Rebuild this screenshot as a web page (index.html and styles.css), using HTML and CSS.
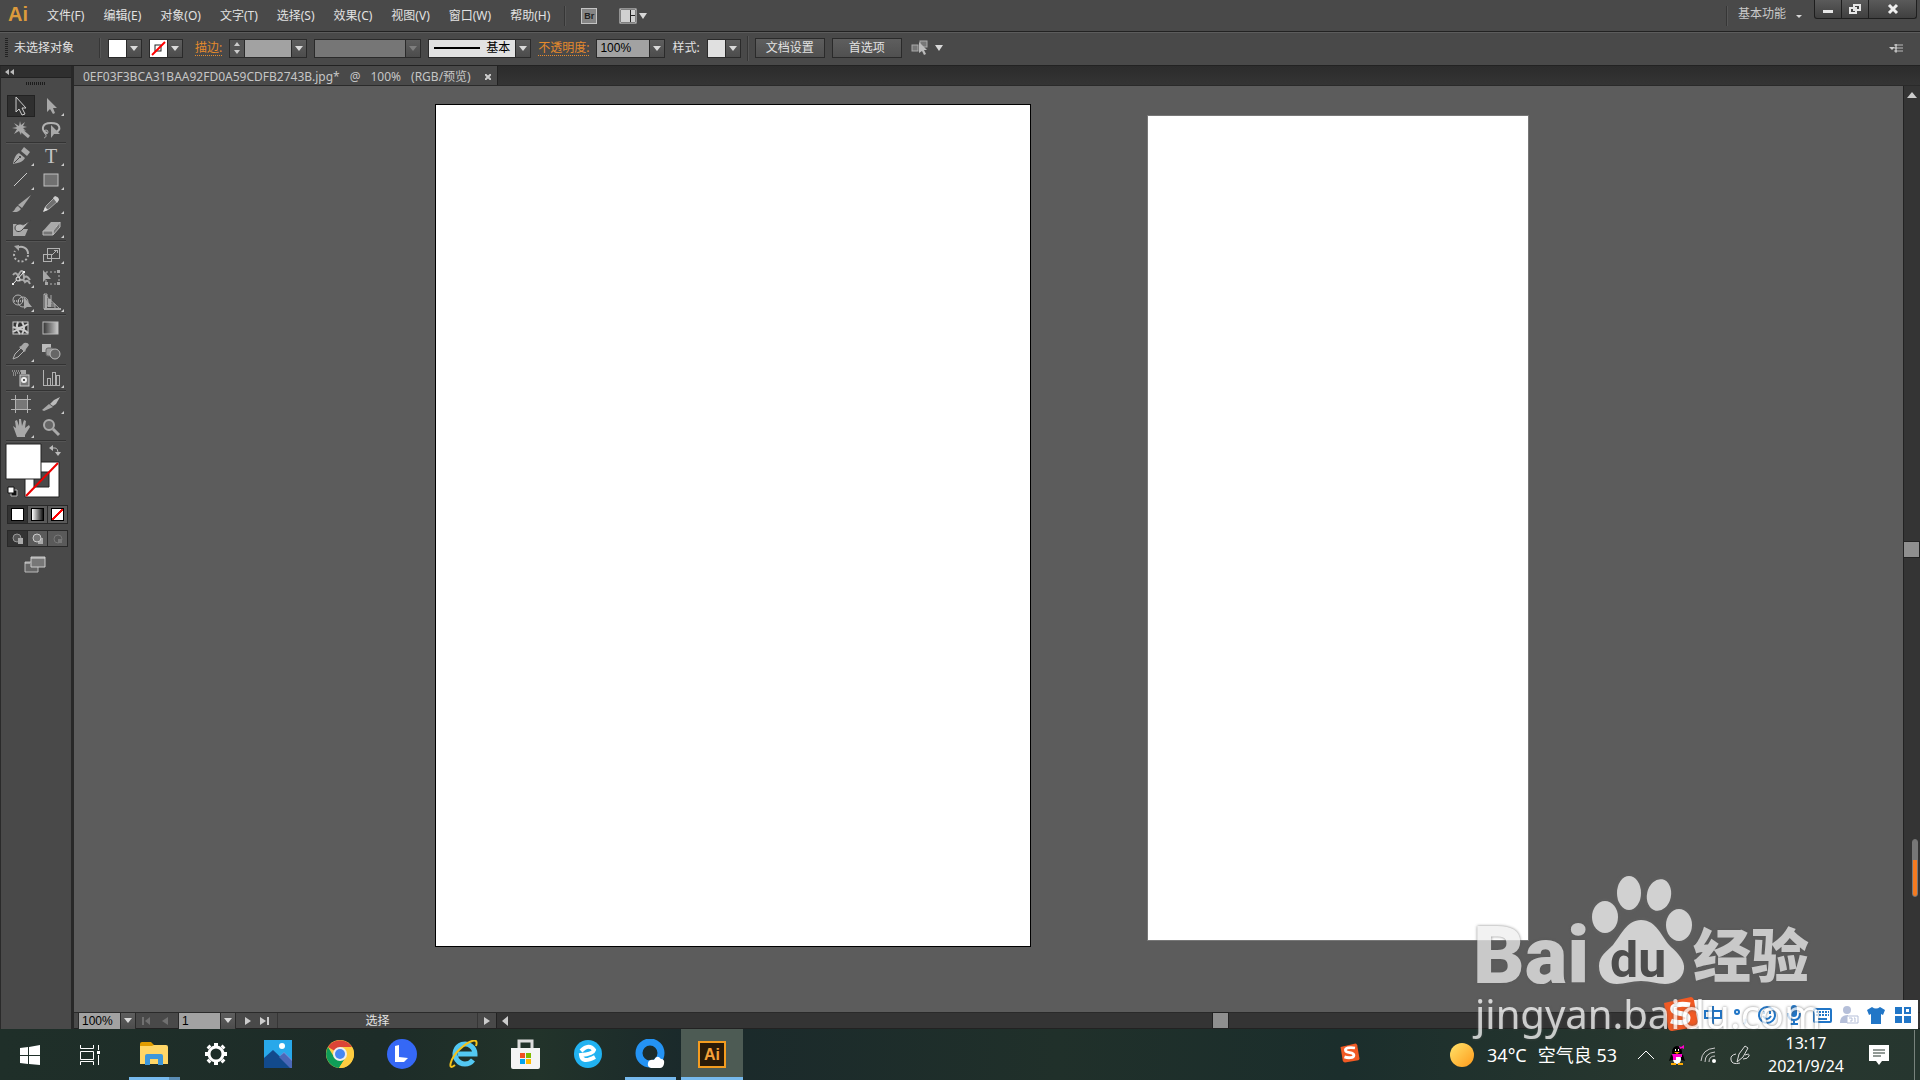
FILE: index.html
```
<!DOCTYPE html>
<html lang="zh-CN">
<head>
<meta charset="utf-8">
<title>Illustrator</title>
<link rel="stylesheet" href="styles.css">
</head>
<body>
<header class="menubar">
  <span class="app-logo">Ai</span>
  <nav class="menus">
    <button>文件(F)</button><button>编辑(E)</button><button>对象(O)</button><button>文字(T)</button><button>选择(S)</button><button>效果(C)</button><button>视图(V)</button><button>窗口(W)</button><button>帮助(H)</button>
  </nav>
  <span class="vline"></span>
  <button class="bridge" aria-label="Bridge">Br</button>
  <button class="arrange" aria-label="排列文档">
    <svg width="28" height="16" viewBox="0 0 28 16"><rect x="1" y="1" width="16" height="14" fill="#222" stroke="#ddd" stroke-width="1"/><path d="M2 2h9v12H2zM12 2h4v5h-4zM12 8h4v6h-4z" fill="#d0d0d0"/><path d="M20 5h8l-4 6z" fill="#d8d8d8"/></svg>
  </button>
  <span class="vline push"></span>
  <button class="workspace">基本功能<i class="caret small"></i></button>
  <div class="window-controls">
    <button aria-label="最小化"><svg width="12" height="12"><path d="M1 7h10v3H1z" fill="#e6e6e6"/></svg></button>
    <button aria-label="还原"><svg width="14" height="12"><path d="M6 2h6v5H6z M2 5h6v5H2z" fill="#444" stroke="#e6e6e6" stroke-width="2"/></svg></button>
    <button class="wide" aria-label="关闭"><svg width="12" height="12"><path d="M2 2l8 8M10 2L2 10" stroke="#eee" stroke-width="3"/></svg></button>
  </div>
</header>

<section class="controlbar">
  <i class="grip"></i>
  <span class="state">未选择对象</span>
  <span class="vline"></span>
  <div class="combo"><button class="swatch white" aria-label="填色"></button><i class="drop"></i></div>
  <div class="combo"><button class="swatch white" aria-label="描边颜色"><svg width="17" height="17"><rect x="5" y="5" width="6" height="6" fill="none" stroke="#222"/><path d="M2 15L15 2" stroke="#f00" stroke-width="2"/></svg></button><i class="drop"></i></div>
  <label class="link first" for="stroke-w">描边:</label>
  <div class="combo"><span class="spin"><i></i><i class="down"></i></span><input id="stroke-w" class="w46" type="text"><i class="drop"></i></div>
  <div class="combo off"><select class="w90" aria-label="变量宽度" disabled><option></option></select><i class="drop"></i></div>
  <div class="combo"><span class="brush"><i></i><select aria-label="画笔定义"><option>基本</option></select></span><i class="drop"></i></div>
  <label class="link" for="opacity">不透明度:</label>
  <div class="combo"><input id="opacity" class="w52" type="text" value="100%"><i class="drop"></i></div>
  <span>样式:</span>
  <div class="combo"><button class="swatch" aria-label="样式"></button><i class="drop"></i></div>
  <span class="vline tight"></span>
  <button class="push-btn">文档设置</button>
  <button class="push-btn">首选项</button>
  <button class="similar" aria-label="选择类似的对象">
    <svg width="34" height="18" viewBox="0 0 34 18"><rect x="2" y="6" width="6" height="6" fill="#777" stroke="#aaa"/><rect x="10" y="2" width="7" height="6" fill="#777" stroke="#aaa"/><path d="M9 3v11l3-2 2 4 2-1-2-4h3z" fill="#bbb"/><path d="M25 6h8l-4 6z" fill="#d8d8d8"/></svg>
  </button>
  <button class="panel-menu" aria-label="面板菜单"><svg width="15" height="9"><path d="M0 3h6L3 6z" fill="#ccc"/><path d="M6 0h2v2H6zM6 3h2v2H6zM6 6h2v2H6zM9 1h5M9 4h5M9 7h5" stroke="#bbb" fill="#bbb" stroke-width="1"/></svg></button>
</section>

<div class="work">
  <aside class="tools">
    <div class="tools-head"><svg width="9" height="6"><path d="M4 0v6L0 3zM9 0v6L5 3z" fill="#bbb"/></svg></div>
    <div class="tools-grip"></div>
    <div class="tool-grid">
      <button class="on" aria-label="选择"><svg viewBox="0 0 30 24"><path d="M10 3v15l3-3 3 6 3-1-3-6h4z" fill="#333" stroke="#ccc"/></svg></button>
      <button class="more" aria-label="直接选择"><svg viewBox="0 0 30 24"><path d="M11 4v14l3-3 3 5 2-1-2-5h4z" class="g"/></svg></button>
      <button aria-label="魔棒"><svg viewBox="0 0 30 24"><path d="M14 3l1 4 4-3-2 4 4 1-4 1 3 3-4-1-1 5-2-4-5 3 3-5-5-1 5-1-3-4 5 3z" class="g"/><path d="M15 12l8 7" stroke="#aaa" stroke-width="3"/></svg></button>
      <button aria-label="套索"><svg viewBox="0 0 30 24"><path d="M11 15c-6-2-6-10 4-10s10 7 5 9" class="s" stroke-width="2"/><circle cx="10" cy="14" r="2" class="s"/><path d="M9 16c2 2 1 3-1 4" class="s"/><path d="M15 7v13l3-4h6z" class="g"/></svg></button>
      <hr>
      <button class="more" aria-label="钢笔"><svg viewBox="0 0 30 24"><path d="M7 20c1-5 2-9 6-11l6 5c-2 4-7 5-12 6z" class="g"/><path d="M15 7l3-4 6 5-3 4z" class="g"/><path d="M8 19l5-5" stroke="#444"/><circle cx="14" cy="13" r="1" fill="#333"/></svg></button>
      <button class="more tt" aria-label="文字">T</button>
      <button class="more" aria-label="直线段"><svg viewBox="0 0 30 24"><path d="M8 18L21 5" stroke="#ccc" stroke-width="1"/></svg></button>
      <button class="more" aria-label="矩形"><svg viewBox="0 0 30 24"><rect x="8" y="6" width="14" height="12" fill="#707070" stroke="#c0c0c0"/></svg></button>
      <button aria-label="画笔"><svg viewBox="0 0 30 24"><path d="M25 3l-9 13-4-3z" class="g"/><path d="M12 14l3 3c-3 4-6 3-9 3 3-1 3-5 6-6z" class="g"/></svg></button>
      <button class="more" aria-label="铅笔"><svg viewBox="0 0 30 24"><path d="M8 19l2-5 8-8 4 3-9 8z" fill="#707070" stroke="#a8a8a8"/><path d="M17 6l2-2q4 1 4 4l-2 3z" fill="#ccc"/><path d="M7 20l2-5 3 3z" fill="#ddd"/></svg></button>
      <button aria-label="斑点画笔"><svg viewBox="0 0 30 24"><path d="M7 8h12l-5 5h8l-3 7H7z" class="g"/><path d="M25 4l-8 9c-3 4-8 3-8-1s5-5 8-3z" fill="#bbb" stroke="#444"/></svg></button>
      <button class="more" aria-label="橡皮擦"><svg viewBox="0 0 30 24"><path d="M7 15l8-9h9l-7 9z" fill="#aaa"/><path d="M7 15h10v4H7zM17 15l7-9v5l-7 8z" fill="#777" stroke="#bbb"/></svg></button>
      <hr>
      <button class="more" aria-label="旋转"><svg viewBox="0 0 30 24"><path d="M11 6a7 7 0 0 1 11 6" class="s" stroke-width="2"/><path d="M22 13a7 7 0 1 1-13-4" class="s" stroke-width="2" stroke-dasharray="2 2"/><path d="M8 4l5-1v6z" class="g"/></svg></button>
      <button class="more" aria-label="比例缩放"><svg viewBox="0 0 30 24" shape-rendering="crispEdges"><path d="M7 12h8v7H7zM11 6h12v10H11zM16 13l5-5M18 8h3v3" class="s"/></svg></button>
      <button class="more" aria-label="宽度"><svg viewBox="0 0 30 24"><path d="M7 9q3-4 5 1 5-11 6 2 2-4 6 2M13 15q4-3 6 1 3-3 5 2" fill="none" stroke="#aaa" stroke-width="2"/><path d="M7 18L18 6" stroke="#eee"/><path d="M6 17h2v2H6zM17 5h2v2h-2z" fill="#eee"/><circle cx="12" cy="13" r="2" fill="#555" stroke="#eee"/></svg></button>
      <button aria-label="自由变换"><svg viewBox="0 0 30 24"><path d="M10 6h13v12H10z" class="s" stroke-dasharray="2 2"/><path d="M7 4v12l3-3h5z" class="g"/><path d="M21 4h3v3h-3zM21 16h3v3h-3zM9 16h3v3H9z" class="g"/></svg></button>
      <button class="more" aria-label="形状生成器"><svg viewBox="0 0 30 24"><circle cx="12" cy="10" r="5" class="s"/><circle cx="17" cy="12" r="5" class="s"/><path d="M8 11h12" stroke="#eee" stroke-dasharray="1 1"/><path d="M18 7v12l3-2h5z" class="g"/></svg></button>
      <button class="more" aria-label="透视网格"><svg viewBox="0 0 30 24"><path d="M8 4v15h16zM8 4h3v12h8M15 5v9h4v5" fill="none" stroke="#aaa" stroke-width="1"/><path d="M9 5h2v13H9zM12 9h3v8h-3zM8 18h17v2H8z" fill="#aaa"/></svg></button>
      <hr>
      <button aria-label="网格"><svg viewBox="0 0 30 24"><rect x="7" y="6" width="15" height="12" fill="#333" stroke="#ccc"/><path d="M7 11q6 3 15-3M7 16q8-6 15 1M12 6q-3 6 2 12M16 6q4 6 0 12" fill="none" stroke="#ccc" stroke-width="2"/></svg></button>
      <button aria-label="渐变"><svg viewBox="0 0 30 24"><defs><linearGradient id="gr"><stop stop-color="#333"/><stop offset="1" stop-color="#ccc"/></linearGradient></defs><rect x="7" y="6" width="15" height="12" fill="url(#gr)" stroke="#bbb"/></svg></button>
      <button class="more" aria-label="吸管"><svg viewBox="0 0 30 24"><path d="M7 19l2-5 6-6 3 3-6 6z" class="s"/><path d="M13 7l2-1 3-3q4-1 5 2l-3 4-1 3z" class="g"/></svg></button>
      <button aria-label="混合"><svg viewBox="0 0 30 24"><path d="M6 4h9v8H6z" fill="#bbb"/><rect x="10" y="8" width="8" height="8" rx="2" fill="#999" stroke="#666"/><circle cx="19" cy="14" r="5" fill="#666" stroke="#bbb"/></svg></button>
      <hr>
      <button class="more" aria-label="符号喷枪"><svg viewBox="0 0 30 24"><path d="M6 5h9M7 7h7M7 9h4" stroke="#ccc" stroke-dasharray="1 1"/><path d="M15 4h5v4h-5z" class="g"/><rect x="14" y="9" width="9" height="11" fill="#777" stroke="#ccc"/><circle cx="18" cy="14" r="2" fill="#222" stroke="#eee" stroke-width="2"/></svg></button>
      <button class="more" aria-label="柱形图"><svg viewBox="0 0 30 24" shape-rendering="crispEdges"><path d="M7 4v15h17M11 19v-7h3v7M16 19V6h3v13M20 19V9h3v10" class="s"/></svg></button>
      <hr>
      <button aria-label="画板"><svg viewBox="0 0 30 24" shape-rendering="crispEdges"><path d="M9 7h12v10H9z" fill="#777"/><path d="M9 3v18M21 3v18M5 7h20M5 17h20" class="s"/></svg></button>
      <button class="more" aria-label="切片"><svg viewBox="0 0 30 24"><path d="M24 5l-6 3-4 4 3 2 3-2z" fill="#bbb"/><path d="M13 12l4 3-9 4-2-1z" class="g"/></svg></button>
      <button class="more" aria-label="抓手"><svg viewBox="0 0 30 24"><path d="M7 10l3 2-1-7 2-1 2 6V3h2l1 7 2-6 2 1-1 7 4-3 1 2-5 8v2h-8z" class="g"/></svg></button>
      <button aria-label="缩放"><svg viewBox="0 0 30 24"><circle cx="13" cy="9" r="5" fill="#666" stroke="#aaa" stroke-width="2"/><path d="M17 13l6 6" stroke="#aaa" stroke-width="3"/></svg></button>
      <hr>
    </div>
    <svg class="fillstroke" width="60" height="56" viewBox="0 0 60 56">
      <path d="M19 18h34v35H19z" fill="#fff" stroke="#222"/><path d="M28 28h15v15H28z" fill="#4a4a4a" stroke="#222"/><path d="M20 52L52 19" stroke="#e00" stroke-width="2"/>
      <path d="M0 0h35v35H0z" fill="#fff" stroke="#222"/><path d="M45 4h4q3 0 3 6" fill="none" stroke="#bbb"/><path d="M43 4l4-3v6zM49 8h6l-3 4z" fill="#bbb"/>
      <path d="M6 46h5v6H5v-3z" fill="#111" stroke="#bbb"/><path d="M2 43h6v6H2z" fill="#fff" stroke="#111"/>
    </svg>
    <div class="seg">
      <button aria-label="颜色"><i></i></button><button aria-label="渐变填充"><i class="grad"></i></button><button aria-label="无"><i class="none"></i></button>
    </div>
    <div class="seg modes">
      <button class="on" aria-label="正常绘图"><svg width="14" height="12"><circle cx="6" cy="5" r="4" fill="#555" stroke="#999"/><path d="M7 5h5v6H7z" fill="#aaa"/></svg></button><button aria-label="背面绘图"><svg width="14" height="12"><path d="M7 5h5v6H7z" fill="#aaa"/><circle cx="6" cy="5" r="4" fill="#777" stroke="#ccc"/></svg></button><button aria-label="内部绘图"><svg width="14" height="12"><circle cx="7" cy="6" r="4" fill="#555" stroke="#777"/><path d="M7 6h4v4H7z" fill="#777"/></svg></button>
    </div>
    <button class="screen" aria-label="更改屏幕模式"><svg width="22" height="17"><path d="M1 6h13v10H1z" fill="#666" stroke="#bbb"/><path d="M7 1h14v10H7z" fill="#777" stroke="#ccc"/><path d="M7 2h14M1 7h5" stroke="#ddd"/></svg></button>
  </aside>

  <main class="document">
    <div class="tabs"><div class="tab"><span>0EF03F3BCA31BAA92FD0A59CDFB2743B.jpg*</span><span>@</span><span>100%</span><span>(RGB/预览)</span><button aria-label="关闭文档"><svg width="6" height="6"><path d="M0 0l6 6M6 0L0 6" stroke="#ccc" stroke-width="2"/></svg></button></div></div>
    <div class="view">
      <div class="canvas">
        <div class="artboard"></div>
        <div class="placed"></div>
      </div>
      <div class="vscroll"><i class="up"></i><i class="thumb"></i><i class="meter"></i></div>
    </div>
    <footer class="status">
      <div class="combo"><input class="w42" type="text" value="100%" aria-label="缩放"><i class="drop"></i></div>
      <button class="dim" aria-label="首页"><svg width="26" height="8"><path d="M0 0h2v8H0zM8 0v8L3 4zM26 0v8l-6-4z" fill="#707070"/></svg></button>
      <div class="combo"><input class="w42" type="text" value="1" aria-label="画板编号"><i class="drop"></i></div>
      <button class="next" aria-label="下一项"><svg width="24" height="8"><path d="M0 0l6 4-6 4zM15 0l6 4-6 4zM22 0h2v8h-2z" fill="#ccc"/></svg></button>
      <span class="tool-name">选择</span>
      <button class="play" aria-label="菜单"><svg width="6" height="8"><path d="M0 0l6 4-6 4z" fill="#ccc"/></svg></button>
      <div class="hscroll"><svg width="6" height="10"><path d="M6 0v10L0 5z" fill="#ccc"/></svg><i class="thumb"></i></div>
    </footer>
  </main>
</div>

<footer class="taskbar">
  <button class="start" aria-label="开始"><svg width="20" height="20"><path d="M0 3l8-1v8H0zM9 2l11-2v10H9zM0 11h8v8l-8-1zM9 11h11v9L9 19z" fill="#fff"/></svg></button>
  <button class="start" aria-label="任务视图"><svg width="20" height="20"><path d="M.5 0v3.500h13V0M.5 6.500h13v8H.5zM.5 20v-3.500h13V20M18.500 0v5M18.500 10v10" fill="none" stroke="#fff"/><path d="M17 6h3v3h-3z" fill="#fff"/></svg></button>
  <button class="app run split" aria-label="文件资源管理器"><svg width="28" height="24"><path d="M0 2q0-2 2-2h9l3 3v4H0z" fill="#e09c00"/><path d="M0 4h12l2-1h12q2 0 2 2v17H0z" fill="#ffd667"/><path d="M5 23V14q0-2 2-2h14q2 0 2 2v9h-5v-6h-8v6z" fill="#3d97db"/></svg></button>
  <button class="app" aria-label="设置"><svg width="24" height="24" viewBox="-12 -12 24 24"><circle r="7" fill="none" stroke="#fff" stroke-width="3"/><g stroke="#fff" stroke-width="4"><path d="M0-8v-3M0 8v3M8 0h3M-8 0h-3M6-6l2-2M-6-6l-2-2M6 6l2 2M-6 6l-2 2"/></g></svg></button>
  <button class="app" aria-label="照片"><svg width="28" height="28"><path d="M0 0h28v28H0z" fill="#28a8ea"/><path d="M13 19l7-7 8 8v8H13z" fill="#7b8bd8"/><path d="M0 18l9-8 19 18H0z" fill="#124a8c"/><path d="M15 17l5-4 8 8v7h-2z" fill="#4a68b8"/><circle cx="18" cy="6" r="3" fill="#fff"/></svg></button>
  <button class="app" aria-label="Chrome"><svg width="28" height="28" viewBox="-14 -14 28 28"><circle r="14" fill="#fc4"/><path d="M0 0L-12-7A14 14 0 0 1 12-7H0z" fill="#db4437"/><path d="M-12-7A14 14 0 0 0-1 14L6 3-6 3z" fill="#0f9d58"/><path d="M0-7H12A14 14 0 0 1-1 14L6 3z" fill="#ffcd40"/><circle r="7" fill="#eee"/><circle r="5" fill="#4587f3"/></svg></button>
  <button class="app" aria-label="L"><svg width="30" height="30"><circle cx="15" cy="15" r="15" fill="#3568f6"/><path d="M8 7l4-1v12l9 1-4 4H8z" fill="#fff"/></svg></button>
  <button class="app" aria-label="Internet Explorer"><svg width="30" height="28"><path d="M24 20a10 10 0 1 1 2-6H9" fill="none" stroke="#53c8f2" stroke-width="5"/><path d="M6 25C-2 32 1 18 11 9S30-3 27 6" fill="none" stroke="#f4c31c" stroke-width="2"/></svg></button>
  <button class="app" aria-label="Microsoft Store"><svg width="30" height="30"><path d="M8 9V2h13v7" fill="none" stroke="#ddd" stroke-width="3"/><path d="M0 9h29v19q0 2-2 2H2q-2 0-2-2z" fill="#f4f4f4"/><path d="M9 14h5v5H9z" fill="#f25022"/><path d="M15 14h5v5h-5z" fill="#7fba00"/><path d="M9 20h5v5H9z" fill="#00a4ef"/><path d="M15 20h5v5h-5z" fill="#ffb900"/></svg></button>
  <button class="app" aria-label="浏览器"><svg width="30" height="30"><circle cx="15" cy="15" r="14" fill="#21b2f1"/><path d="M8 12q8-8 13-1-1 4-13 5 1 9 14 2" fill="none" stroke="#fff" stroke-width="4"/></svg></button>
  <button class="app run" aria-label="QQ浏览器"><svg width="30" height="30"><circle cx="15" cy="14" r="11" fill="none" stroke="#2493f4" stroke-width="7"/><path d="M16 29q-4-1-3-5t6-3q3-6 7-1 4 0 3 5-1 4-4 4z" fill="#fff"/></svg></button>
  <button class="app active" aria-label="Illustrator"><span class="ai-tile">Ai</span></button>
  <div class="tray">
    <span class="sogou"><svg width="20" height="20" viewBox="0 0 36 36"><path d="M1 7L28 1q2 0 3 3l4 24q0 2-2 3L9 35q-3 0-4-3z" fill="#f15a24"/><path d="M27 9c-10-2-19 0-17 5s15 2 15 8-12 5-17 3" fill="none" stroke="#fff" stroke-width="5"/></svg></span>
    <button class="weather"><svg width="24" height="24"><defs><linearGradient id="sun" x2="1" y2="1"><stop stop-color="#ffe46b"/><stop offset="1" stop-color="#ff9a1a"/></linearGradient></defs><circle cx="12" cy="12" r="12" fill="url(#sun)"/></svg><span>34°C</span><span>空气良 53</span></button>
    <button aria-label="显示隐藏的图标"><svg width="16" height="10"><path d="M0 9l8-8 8 8" fill="none" stroke="#fff"/></svg></button>
    <button class="qq" aria-label="QQ"><svg width="16" height="20"><ellipse cx="8" cy="7" rx="5" ry="6" fill="#000"/><path d="M2 10h12l2 6-3-1H3l-3 1z" fill="#000"/><ellipse cx="8" cy="14" rx="4" ry="5" fill="#fff"/><path d="M3 9h10v3H7v3H4v-3z" fill="#f0c"/><path d="M5 7h6l-3 2zM2 18h5v2H2zM9 18h5v2H9z" fill="#fa0"/><path d="M6 4h1v2H6zM9 4h1v2H9z" fill="#fff"/><path d="M10 1l2 1 3-2v4l-2-1-2 1z" fill="#f0c"/></svg></button>
    <button aria-label="网络"><svg width="16" height="16"><path d="M1 14Q2 2 15 1M5 15Q5 6 15 5M9 15q0-6 6-6" fill="none" stroke="#ccc"/><circle cx="14" cy="14" r="2" fill="#fff"/></svg></button>
    <button aria-label="Windows Ink"><svg width="20" height="20"><path d="M7 17L9 9l6-8 3 2-5 9zM6 9q-6 1-5 6t9 3M15 10q5-2 4 1t-6 3" fill="none" stroke="#ddd"/></svg></button>
    <button class="clock"><span>13:17</span><span>2021/9/24</span></button>
    <button class="notice" aria-label="通知"><svg width="20" height="20"><path d="M0 0h20v16h-7l-3 4-3-4H0z" fill="#fff"/><path d="M4 5h12M4 8h12M4 11h8" stroke="#26362e"/></svg></button>
  </div>
</footer>

<div class="ime">
  <svg class="ime-logo" width="36" height="36" viewBox="0 0 36 36"><path d="M1 7L28 1q2 0 3 3l4 24q0 2-2 3L9 35q-3 0-4-3z" fill="#f15a24"/><path d="M27 9c-10-2-19 0-17 5s15 2 15 8-12 5-17 3" fill="none" stroke="#fff" stroke-width="5"/></svg>
  <svg width="20" height="20"><path d="M2 6h16v7H2zM10 1v18" fill="none" stroke="#2176c7" stroke-width="2"/></svg>
  <svg width="20" height="20"><circle cx="7" cy="7" r="2" fill="none" stroke="#2176c7" stroke-width="2"/><path d="M15 14q2 2-1 5" fill="none" stroke="#8bb6de" stroke-width="2"/></svg>
  <svg width="20" height="20"><circle cx="10" cy="10" r="8" fill="none" stroke="#2176c7" stroke-width="2"/><path d="M7 6v3M13 6v3M6 11q4 6 8 0" fill="none" stroke="#2176c7" stroke-width="2"/></svg>
  <svg width="20" height="20"><rect x="7" y="0" width="6" height="12" rx="3" fill="#2176c7"/><path d="M4 8q0 7 6 7t6-7M10 15v4M6 19h8" fill="none" stroke="#2176c7" stroke-width="2"/></svg>
  <svg width="20" height="20"><rect x="2" y="4" width="17" height="13" rx="1" fill="#fff" stroke="#2176c7" stroke-width="2"/><path d="M4 7h13M4 10h13" stroke="#2176c7" stroke-width="2" stroke-dasharray="2 1"/><path d="M6 14h9" stroke="#2176c7" stroke-width="2"/></svg>
  <svg width="20" height="20"><circle cx="8" cy="5" r="4" fill="#b5bfd9"/><path d="M1 18q0-8 8-8v8z" fill="#b5bfd9"/><path d="M8 11h11v7H8zM10 13h3v3h-2M15 13h1v4" fill="#fff" stroke="#b5bfd9"/></svg>
  <svg width="20" height="20"><path d="M6 2q4 3 8 0l5 3-2 5-2-1v10H5V9l-2 1-2-5z" fill="#2176c7"/></svg>
  <svg width="20" height="20"><path d="M2 2h7v7H2zM2 11h7v7H2zM11 11h7v7h-7z" fill="#2176c7"/><rect x="12" y="3" width="5" height="5" fill="#fff" stroke="#2176c7" stroke-width="2"/></svg>
</div>

<div class="watermark">
  <div class="brand">
    <span class="bai">Bai</span>
    <span class="paw"><svg width="100" height="110" viewBox="0 0 100 110"><g fill="#cfcfcf"><ellipse cx="13" cy="41" rx="13" ry="16"/><ellipse cx="37" cy="17" rx="12" ry="17"/><ellipse cx="67" cy="19" rx="12" ry="16" transform="rotate(12 67 19)"/><ellipse cx="87" cy="49" rx="13" ry="16"/><path d="M49 44c16 0 20 17 30 27 7 6 14 14 13 22-1 10-10 15-19 15-8 0-14-3-24-3s-16 3-24 3c-10 0-18-6-18-18 0-10 8-15 14-21 8-10 14-25 28-25z"/></g></svg><b>du</b></span>
    <span class="jy">经验</span>
  </div>
  <div class="url">jingyan.baidu.com</div>
</div>
</body>
</html>
```
FILE: styles.css
```
* { box-sizing: border-box; }
body {
  margin: 0; min-height: 100vh; display: flex; flex-direction: column; position: relative; overflow: hidden;
  background: #494949; color: #e2e2e2; font: 12px/16px "Noto Sans", "Noto Sans CJK SC", sans-serif;
}
button, input, select { font: inherit; color: inherit; margin: 0; padding: 0; border: 0; background: none; border-radius: 0; }
svg { display: block; flex: none; }
.g { fill: #a8a8a8; }
.s { fill: none; stroke: #b2b2b2; }
.vline { width: 2px; height: 20px; background: #363636; border-right: 1px solid #565656; flex: none; }

/* Menu bar */
.menubar { height: 32px; display: flex; align-items: center; background: #494949; border-bottom: 1px solid #222; }
.app-logo { width: 37px; padding-left: 8px; font: bold 20px/28px "Liberation Sans", sans-serif; color: #dc9a3c; margin-top: -4px; }
.menus { display: flex; }
.menus button { padding: 0 9px 0 10px; white-space: nowrap; }
.menus + .vline { margin-left: 5px; }
.bridge { width: 16px; height: 16px; margin: 0 22px 0 15px; background: #858585; border: 1px solid #c4c4c4; color: #222; font: bold 9px/14px "Liberation Sans", sans-serif; }
.push { margin-left: auto; }
.workspace { display: flex; align-items: center; gap: 10px; padding: 0 12px 4px 10px; color: #c9c9c9; }
.caret { border: 4px solid transparent; border-top: 6px solid #d8d8d8; border-bottom: 0; }
.caret.small { border-width: 3px; border-top-width: 3px; border-bottom-width: 0; margin-top: 5px; }
.window-controls { display: flex; align-self: flex-start; height: 19px; border: 1px solid #1e1e1e; border-top: 0; margin-right: 3px; border-radius: 0 0 3px 3px; background: linear-gradient(#5a5a5a, #3f3f3f); }
.window-controls button { width: 27px; display: flex; justify-content: center; align-items: center; border-right: 1px solid #1e1e1e; }
.window-controls .wide { width: 47px; border-right: 0; }

/* Control bar */
.controlbar { height: 34px; display: flex; align-items: center; gap: 7px; padding: 0 0 2px 5px; border-top: 1px solid #5c5c5c; border-bottom: 1px solid #222; }
.controlbar > * { flex: none; }
.grip { width: 3px; height: 20px; background: repeating-linear-gradient(#222 0 1px, #494949 1px 2px); }
.state { width: 78px; margin-left: -1px; }
.combo { display: flex; height: 19px; border: 1px solid #2a2a2a; }
.swatch { width: 17px; background: #e0e0e0; }
.swatch.white { background: #fff; }
.drop { width: 15px; border-left: 1px solid #2a2a2a; background: linear-gradient(#5e5e5e, #4c4c4c); display: flex; align-items: center; justify-content: center; }
.drop::before { content: ""; border: 4px solid transparent; border-top: 5px solid #dadada; border-bottom: 0; }
.combo input, .combo select { appearance: none; background: #a2a2a2; color: #000; outline: 0; font-family: "Liberation Sans", "Noto Sans CJK SC", sans-serif; line-height: 15px; }
.combo input { padding: 0 3px; }
.off select { background: #767676; opacity: 1; }
.off .drop::before { border-top-color: #7e7e7e; }
.w42 { width: 41px; } .w46 { width: 46px; } .w52 { width: 52px; } .w90 { width: 90px; }
.link { color: #e58a2c; border-bottom: 1px dotted #e58a2c; line-height: 14px; }
.first { margin: 0 0 0 5px; }
.spin { width: 15px; display: flex; flex-direction: column; justify-content: space-around; align-items: center; background: #555; border-right: 1px solid #2a2a2a; }
.spin i { border: 3px solid transparent; border-bottom: 4px solid #ccc; border-top: 0; }
.spin .down { border-top: 4px solid #ccc; border-bottom: 0; }
.brush { display: flex; align-items: center; width: 86px; padding-left: 5px; gap: 6px; background: #e2e2e2; }
.brush i { width: 46px; height: 2px; background: #000; }
.combo .brush select { background: none; width: 28px; font-size: 12px; }
.vline.tight { height: 25px; margin: 0 -1px; }
.push-btn { width: 70px; height: 20px; border: 1px solid #2a2a2a; background: linear-gradient(#5e5e5e, #505050); line-height: 16px; }
.similar { margin-left: 1px; }
.panel-menu { margin: 0 16px 0 auto; }

/* Workspace */
.work { flex: 1; display: flex; }
.tools { width: 74px; flex: none; border-left: 1px solid #2a2a2a; border-right: 3px solid #282828; }
.tools-head { height: 12px; background: #2f2f2f; border-bottom: 1px solid #222; padding: 3px 4px; }
.tools-grip { height: 3px; width: 20px; margin: 4px 0 9px 25px; background: repeating-linear-gradient(90deg, #1c1c1c 0 1px, #494949 1px 2px); }
.tool-grid { display: grid; grid-template-columns: 30px 30px; padding-left: 5px; }
.tool-grid button { height: 24px; position: relative; }
.tool-grid svg { width: 30px; height: 24px; }
.tool-grid .on { background: #2f2f2f; border: 1px solid #222; margin: 1px; height: 22px; display: flex; align-items: center; justify-content: center; }
.tool-grid .more::after { content: ""; position: absolute; right: 2px; bottom: 2px; border: 0 solid transparent; border-left-width: 3px; border-bottom: 3px solid #ccc; }
.tool-grid .tt { font: 20px/24px "Liberation Serif", serif; color: #c4c4c4; }
.tool-grid hr { grid-column: 1 / -1; width: 60px; height: 2px; margin: 0; border: 0; border-top: 1px solid #333; border-bottom: 1px solid #555; }
.fillstroke { margin: 2px 0 0 5px; overflow: visible; }
.seg { display: flex; width: 61px; height: 19px; margin: 5px 0 6px 6px; border: 1px solid #282828; background: #5a5a5a; }
.seg button { flex: 1; display: flex; align-items: center; justify-content: center; border-right: 1px solid #2a2a2a; }
.seg button:first-child { background: #333; }
.seg button:last-child { border-right: 0; }
.seg i { width: 13px; height: 13px; background: #fff; border: 1px solid #000; }
.seg .grad { background: linear-gradient(90deg, #fff, #111); }
.seg .none { background: linear-gradient(135deg, #fff 42%, #f00 43% 57%, #fff 58%); }
.modes { height: 17px; }
.screen { margin: 3px 0 0 23px; }

.document { flex: 1; min-width: 0; display: flex; flex-direction: column; }
.tabs { height: 20px; background: linear-gradient(#2c2c2c, #343434); display: flex; border-bottom: 1px solid #2a2a2a; }
.tab { display: flex; align-items: center; gap: 10px; padding: 2px 6px 0 9px; background: #494949; border-right: 1px solid #222; color: #c6c6c6; white-space: nowrap; }
.tab button { margin-left: 4px; }
.view { flex: 1; display: flex; }
.canvas { flex: 1; position: relative; background: #5c5c5c; }
.artboard { position: absolute; left: 361px; top: 18px; width: 596px; height: 843px; background: #fff; border: 1px solid #000; }
.placed { position: absolute; left: 1073px; top: 29px; width: 382px; height: 826px; background: #fff; border: 1px solid #777; }
.vscroll { width: 17px; background: #343434; border-left: 1px solid #222; position: relative; }
.up { position: absolute; left: 3px; top: 6px; border: 5px solid transparent; border-bottom: 6px solid #ccc; border-top: 0; }
.vscroll .thumb { position: absolute; left: 0; bottom: 455px; width: 15px; height: 15px; background: #8f8f8f; outline: 1px solid #222; }
.meter { position: absolute; right: 2px; bottom: 115px; width: 6px; height: 58px; border-radius: 3px; border: 1px solid #777; background: linear-gradient(#777 20px, #f47a20 20px); }
.status { height: 17px; display: flex; align-items: center; border-top: 1px solid #2a2a2a; border-bottom: 1px solid #222; padding-left: 4px; }
.status .combo { height: 16px; border-width: 0 1px; }
.status input { line-height: 14px; }
.dim { width: 42px; padding-left: 6px; }
.next { width: 41px; padding-left: 9px; }
.tool-name { width: 201px; text-align: center; border: 1px solid #363636; border-width: 0 1px; line-height: 15px; }
.play { width: 18px; padding-left: 6px; }
.hscroll { flex: 1; align-self: stretch; display: flex; align-items: center; background: #343434; border-left: 1px solid #222; padding-left: 5px; position: relative; }
.hscroll .thumb { position: absolute; left: 716px; top: 0; width: 15px; height: 15px; background: #8f8f8f; outline: 1px solid #222; }

/* Taskbar */
.taskbar { height: 51px; display: flex; background: linear-gradient(90deg, #1f2f29, #1d2c28 20%, #22332a 28%, #1a292b 36%, #20302a 55%, #1b2e2c 70%, #29382f 88%, #26362f); color: #fff; }
.taskbar button { display: flex; align-items: center; justify-content: center; }
.start { width: 60px; }
.start + .app { margin-left: 3px; }
.app { width: 62px; border-bottom: 3px solid transparent; padding-top: 2px; position: relative; }
.run::after { content: ""; position: absolute; left: 6px; right: 5px; bottom: -3px; height: 3px; background: #76b9ed; }
.split::after { background: linear-gradient(90deg, #76b9ed 40px, #5b8db4 40px); }
.taskbar .active { background: #4d5b54; border-color: #76b9ed; }
.ai-tile { width: 28px; height: 27px; border: 2px solid #f59c1f; background: #2a1a08; color: #f5a13a; font: bold 16px/23px "Liberation Sans", sans-serif; }
.tray { margin-left: auto; display: flex; align-items: center; }
.sogou { margin: 0 90px 3px 0; }
.weather { gap: 11px; font-size: 18px; line-height: 24px; margin-right: 13px; white-space: nowrap; }
.weather span:first-of-type { margin-left: 2px; }
.tray > button { min-width: 32px; height: 50px; }
.tray > .qq { min-width: 30px; }
.clock { flex-direction: column; width: 100px; font-size: 16px; line-height: 23px; }
.notice { width: 46px; margin-right: 12px; }
.tray::after { content: ""; width: 1px; height: 50px; background: #77827c; margin-right: 5px; }

/* Floating input-method bar */
.ime { position: absolute; right: 2px; bottom: 51px; height: 29px; width: 231px; padding: 0 5px 0 16px; display: flex; align-items: center; justify-content: space-between; background: #fff; }
.ime-logo { position: absolute; left: -24px; top: -4px; }

/* Watermark */
.watermark { position: absolute; right: 103px; bottom: 38px; width: 342px; color: #fff; opacity: .75; pointer-events: none; }
.brand { display: flex; align-items: flex-end; height: 110px; white-space: nowrap; text-shadow: 0 0 3px #555; }
.bai { font: 900 80px/80px Roboto, sans-serif; width: 117px; margin: 0 2px -10px -2px; color: #eee; }
.paw { position: relative; width: 101px; }
.paw svg { filter: drop-shadow(0 0 2px #555) brightness(1.2); }
.paw b { position: absolute; left: 18px; bottom: 1px; font: bold 50px/50px Roboto, sans-serif; color: #484848; text-shadow: none; }
.jy { font: 900 58px/58px "Noto Sans CJK SC", sans-serif; color: #eee; margin-bottom: 5px; }
.url { font-size: 40px; line-height: 56px; text-shadow: 0 0 3px #555; }
```
